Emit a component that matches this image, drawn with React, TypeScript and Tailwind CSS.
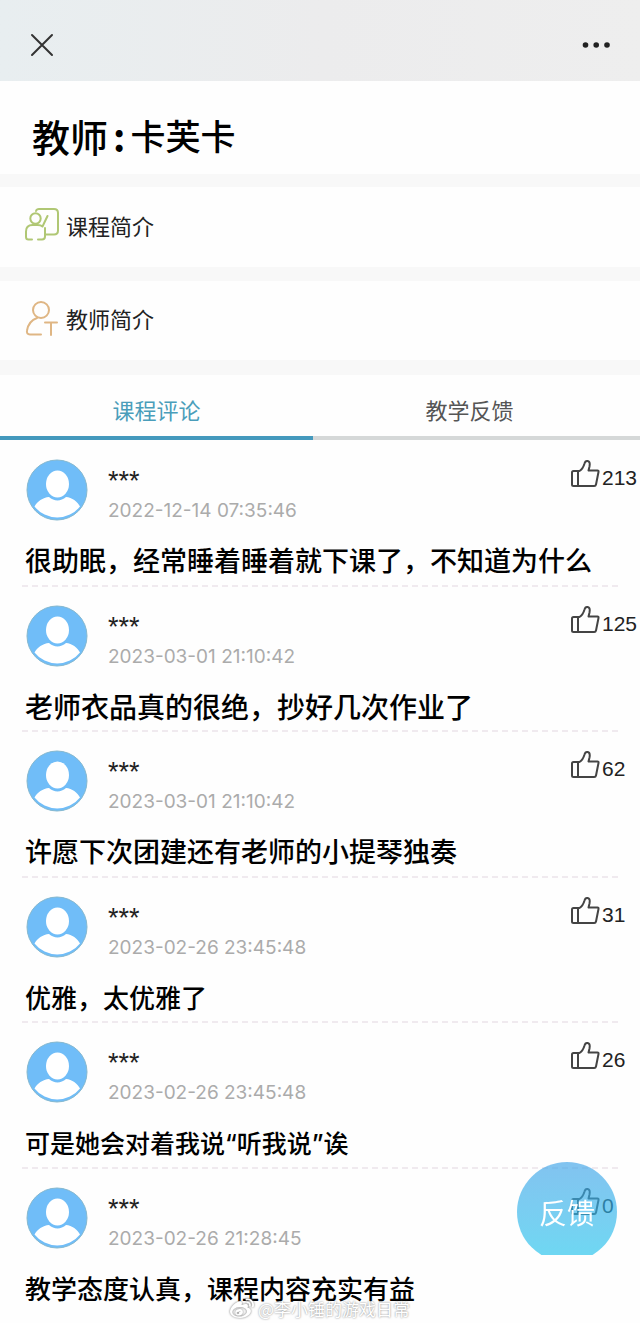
import { FaWeibo } from "react-icons/fa";

type Comment = {
  id: number;
  date: string;
  text: string;
  likes: number;
  size: string;
};

const comments: Comment[] = [
  { id: 1, date: "2022-12-14 07:35:46", text: "很助眠，经常睡着睡着就下课了，不知道为什么", likes: 213, size: "text-[27px]" },
  { id: 2, date: "2023-03-01 21:10:42", text: "老师衣品真的很绝，抄好几次作业了", likes: 125, size: "text-[28px]" },
  { id: 3, date: "2023-03-01 21:10:42", text: "许愿下次团建还有老师的小提琴独奏", likes: 62, size: "text-[27px]" },
  { id: 4, date: "2023-02-26 23:45:48", text: "优雅，太优雅了", likes: 31, size: "text-[26px]" },
  { id: 5, date: "2023-02-26 23:45:48", text: "可是她会对着我说“听我说”诶", likes: 26, size: "text-[25px]" },
  { id: 6, date: "2023-02-26 21:28:45", text: "教学态度认真，课程内容充实有益", likes: 0, size: "text-[26px]" },
];

function CourseIcon() {
  return (
    <svg className="w-9 h-9" viewBox="0 0 36 36" fill="none" stroke="#b0c774" strokeWidth="2" strokeLinecap="round" strokeLinejoin="round">
      <circle cx="11.500" cy="11.500" r="5.200" />
      <path d="M8 32.500H4.500a2.500 2.500 0 0 1-2.500-2.500V24.500c0-4 2.500-6.500 6.500-6.500h5c2 0 4 .5 5 1.500l5-10.500" />
      <path d="M14 32.500h4a3 3 0 0 0 3-3V21" />
      <path d="M12 4c.5-1.500 1.500-2 3-2h15c2.500 0 4 1.500 4 4v17.500c0 2.500-1.500 4-4 4h-8" />
    </svg>
  );
}

function TeacherIcon() {
  return (
    <svg className="w-9 h-9" viewBox="0 0 36 36" fill="none" stroke="#dfb684" strokeWidth="2" strokeLinecap="round" strokeLinejoin="round">
      <circle cx="17" cy="9" r="8" />
      <path d="M17 33.500H6c-2.500 0-3.500-1.500-3-4 1-6 4.500-10.500 10-12.500" />
      <path d="M21 21.500h12M27 21.500v12.500" />
    </svg>
  );
}

function Avatar() {
  return (
    <svg className="w-[62px] h-[62px]" viewBox="0 0 62 62" aria-hidden="true">
      <circle cx="31" cy="31" r="30" fill="#70bdf8" />
      <path d="M8.500 47.500c2.500-5 8.500-9 14.500-9.500 5 4.500 12 4.500 17 0 6 .5 11.500 4.500 14 9.500a29 29 0 0 1-45.500 0z" fill="#fff" />
      <ellipse cx="31.500" cy="25" rx="11.500" ry="13.500" fill="#fff" />
      <circle cx="31" cy="31" r="30" fill="none" stroke="#85b8cf" strokeWidth="1" />
    </svg>
  );
}

function ThumbIcon() {
  return (
    <svg className="w-[30px] h-[30px] shrink-0" viewBox="0 0 30 30" fill="none" stroke="#444" strokeWidth="2" strokeLinejoin="round">
      <path d="M2 13.500c0-1 .5-1.500 1.500-1.500H9.500c2.500-1.500 4-4 5-7.500.5-2 1.700-2.800 3.200-2.500 2.300.5 2.300 3 1.800 5.500L18.500 11.500h9c.8 0 1.200.5 1 1.500l-2.500 12.500c-.2 1-.8 1.500-1.800 1.500H3.500c-1 0-1.500-.5-1.500-1.500z" />
      <path d="M8 12v15" />
    </svg>
  );
}

function CommentItem({ comment }: { comment: Comment }) {
  return (
    <li className="group relative odd:h-[146px] even:h-[145px] pt-[18px]">
      <div className="flex items-start">
        <div className="ml-[26px] shrink-0">
          <Avatar />
        </div>
        <div className="ml-5 flex-1 pt-2">
          <div className="font-['Liberation_Sans',sans-serif] text-[27px] leading-7 text-[#222]">***</div>
          <div className="font-['Inter',sans-serif] text-[19px] leading-8 text-[#ababab]">{comment.date}</div>
        </div>
        <button className="flex w-[70px] items-start" aria-label={`赞 ${comment.likes}`}>
          <ThumbIcon />
          <span className="ml-0.5 pt-[5px] font-['Liberation_Sans',sans-serif] text-[21px] leading-7 text-[#222]">{comment.likes}</span>
        </button>
      </div>
      <p
        className={`ml-[25px] mt-[15px] whitespace-nowrap font-['Inter','Noto_Sans_CJK_SC',sans-serif] font-medium leading-10 text-black ${comment.size}`}
      >
        {comment.text}
      </p>
      <div className="absolute bottom-0 left-[22px] right-[22px] border-b-2 border-dashed border-[#f0eaef] group-last:hidden" />
    </li>
  );
}

export default function App() {
  return (
    <div className="relative min-h-screen overflow-hidden bg-[#fefefe] font-['Noto_Sans_CJK_SC',sans-serif]">
      <header className="flex h-[81px] items-center justify-between bg-linear-to-r from-[#e8eef0] via-[#ececed] to-[#eeeeee] px-[30px] pt-2">
        <button aria-label="关闭">
          <svg className="w-6 h-6" viewBox="0 0 24 24" stroke="#333" strokeWidth="2" strokeLinecap="round">
            <path d="M2 2l20 20M22 2L2 22" />
          </svg>
        </button>
        <button aria-label="更多">
          <svg className="w-7 h-6" viewBox="0 0 28 24" fill="#222">
            <circle cx="3.500" cy="12" r="2.800" />
            <circle cx="14.200" cy="12" r="2.800" />
            <circle cx="25" cy="12" r="2.800" />
          </svg>
        </button>
      </header>

      <h1 className="flex h-[93px] items-center pl-8 pt-4 font-medium text-black">
        <span className="text-[38px]">教师</span>
        <span className="mx-[5px] text-[38px] font-bold">:</span>
        <span className="text-[35px]">卡芙卡</span>
      </h1>

      <a href="#" className="flex h-[93px] items-center gap-1.5 border-t-[13px] border-[#f8f8f8] pb-1 pl-6 text-[22px] text-[#222]">
        <CourseIcon />
        课程简介
      </a>
      <a href="#" className="flex h-[93px] items-center gap-1.5 border-t-[14px] border-[#f8f8f8] pb-1 pl-6 text-[22px] text-[#222]">
        <TeacherIcon />
        教师简介
      </a>

      {/* Tabs */}
      <div className="border-t-[15px] border-t-[#f8f8f8]">
        <div className="grid h-[65px] grid-cols-2 border-b-4 border-[#d5d8d8] pr-3.5 text-[22px]">
          <button className="-mb-1 border-b-4 border-[#4499bd] pt-2 text-[#4a9dba]">课程评论</button>
          <button className="pt-2 text-[#555]">教学反馈</button>
        </div>
      </div>

      <ul className="pt-px">
        {comments.map((comment) => (
          <CommentItem key={comment.id} comment={comment} />
        ))}
      </ul>

      {/* Floating feedback button */}
      <div className="fixed bottom-[68px] right-[23px] h-[93px] w-[100px] overflow-hidden">
        <button className="h-[100px] w-[100px] rounded-full bg-linear-to-b from-[#3ea3e8]/65 to-[#1cc4ec]/65 text-[28px] text-white">
          反馈
        </button>
      </div>

      {/* Watermark */}
      <div className="absolute bottom-0 left-0 flex w-full items-center justify-center gap-1 text-[17px] leading-7 text-white [text-shadow:0_0_2px_#777]">
        <FaWeibo className="w-6 h-6 text-white drop-shadow-[0_0_1px_#777]" />
        <span>@李小锤的游戏日常</span>
      </div>
    </div>
  );
}
